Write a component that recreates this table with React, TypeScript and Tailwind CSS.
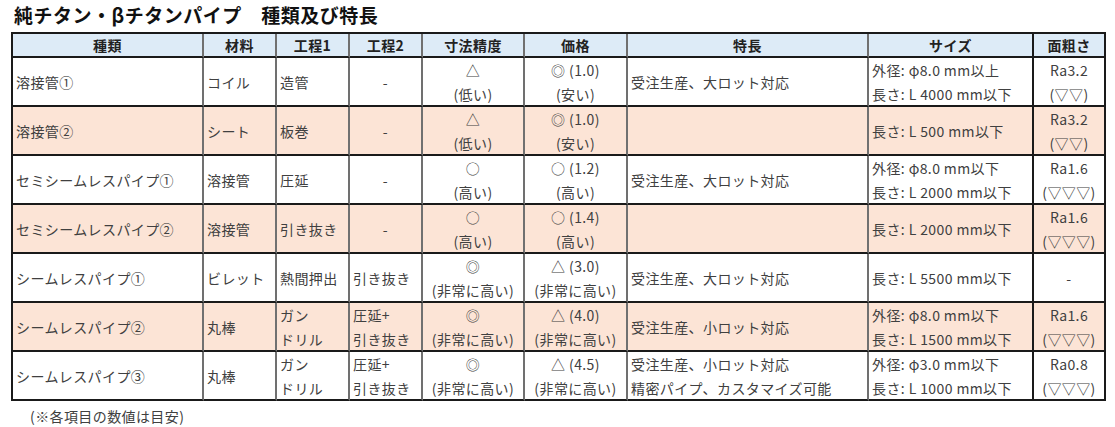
import React from 'react';

type Row = {
  name: string;
  material: string;
  step1: string[];
  step2: string[];
  precision: string[];
  price: string[];
  feature: string[];
  size: string[];
  rough: string[];
  pink?: boolean;
};

const rows: Row[] = [
  {
    name: '溶接管①',
    material: 'コイル',
    step1: ['造管'],
    step2: ['-'],
    precision: ['△', '(低い)'],
    price: ['◎ (1.0)', '(安い)'],
    feature: ['受注生産、大ロット対応'],
    size: ['外径: φ8.0 mm以上', '長さ: L 4000 mm以下'],
    rough: ['Ra3.2', '(▽▽)'],
  },
  {
    name: '溶接管②',
    material: 'シート',
    step1: ['板巻'],
    step2: ['-'],
    precision: ['△', '(低い)'],
    price: ['◎ (1.0)', '(安い)'],
    feature: [],
    size: ['長さ: L 500 mm以下'],
    rough: ['Ra3.2', '(▽▽)'],
    pink: true,
  },
  {
    name: 'セミシームレスパイプ①',
    material: '溶接管',
    step1: ['圧延'],
    step2: ['-'],
    precision: ['○', '(高い)'],
    price: ['○ (1.2)', '(高い)'],
    feature: ['受注生産、大ロット対応'],
    size: ['外径: φ8.0 mm以下', '長さ: L 2000 mm以下'],
    rough: ['Ra1.6', '(▽▽▽)'],
  },
  {
    name: 'セミシームレスパイプ②',
    material: '溶接管',
    step1: ['引き抜き'],
    step2: ['-'],
    precision: ['○', '(高い)'],
    price: ['○ (1.4)', '(高い)'],
    feature: [],
    size: ['長さ: L 2000 mm以下'],
    rough: ['Ra1.6', '(▽▽▽)'],
    pink: true,
  },
  {
    name: 'シームレスパイプ①',
    material: 'ビレット',
    step1: ['熱間押出'],
    step2: ['引き抜き'],
    precision: ['◎', '(非常に高い)'],
    price: ['△ (3.0)', '(非常に高い)'],
    feature: ['受注生産、大ロット対応'],
    size: ['長さ: L 5500 mm以下'],
    rough: ['-'],
  },
  {
    name: 'シームレスパイプ②',
    material: '丸棒',
    step1: ['ガン', 'ドリル'],
    step2: ['圧延+', '引き抜き'],
    precision: ['◎', '(非常に高い)'],
    price: ['△ (4.0)', '(非常に高い)'],
    feature: ['受注生産、小ロット対応'],
    size: ['外径: φ8.0 mm以下', '長さ: L 1500 mm以下'],
    rough: ['Ra1.6', '(▽▽▽)'],
    pink: true,
  },
  {
    name: 'シームレスパイプ③',
    material: '丸棒',
    step1: ['ガン', 'ドリル'],
    step2: ['圧延+', '引き抜き'],
    precision: ['◎', '(非常に高い)'],
    price: ['△ (4.5)', '(非常に高い)'],
    feature: ['受注生産、小ロット対応', '精密パイプ、カスタマイズ可能'],
    size: ['外径: φ3.0 mm以下', '長さ: L 1000 mm以下'],
    rough: ['Ra0.8', '(▽▽▽)'],
  },
];

const headers = ['種類', '材料', '工程1', '工程2', '寸法精度', '価格', '特長', 'サイズ', '面粗さ'];

function Cell({
  lines,
  center,
  last,
  darkRight,
}: {
  lines: string[];
  center?: boolean;
  last?: boolean;
  darkRight?: boolean;
}) {
  return (
    <div
      className={`flex h-[49px] flex-col justify-center border-b-2 border-r-2 border-b-[#1a1a1a] px-[3px] leading-[24px] ${
        center ? 'items-center' : 'items-start'
      } ${last || darkRight ? 'border-r-[#1a1a1a]' : 'border-r-[#707070]'}`}
    >
      {lines.map((l, i) => (
        <span key={i} className="whitespace-nowrap">
          {l}
        </span>
      ))}
    </div>
  );
}

export default function App() {
  return (
    <div
      className="h-[427px] w-[1115px] bg-white text-[#404040]"
      style={{ fontFamily: '"Noto Sans CJK JP", "Noto Sans", sans-serif' }}
    >
      <h1 className="flex h-[32px] items-center pl-[14px] pb-[2px] text-[19px] font-bold tracking-[0.5px] text-[#111]">
        純チタン・βチタンパイプ　種類及び特長
      </h1>

      <div className="ml-[11px] grid w-[1095px] grid-cols-[191px_73px_73px_73px_102px_103px_241px_165px_72px] border-l-2 border-t-2 border-[#1a1a1a] text-[14px] tracking-[0.4px]">
        {headers.map((h, i) => (
          <div
            key={h}
            className={`flex h-[24px] items-center justify-center border-b-2 border-r-2 border-b-[#1a1a1a] bg-[#ddebf7] font-bold text-[#222] ${
              i >= 7 ? 'border-r-[#1a1a1a]' : 'border-r-[#707070]'
            }`}
          >
            {h}
          </div>
        ))}

        {rows.map((r) => (
          <div key={r.name} className={`contents ${r.pink ? '[&>div]:bg-[#fce4d6]' : '[&>div]:bg-white'}`}>
            <Cell lines={[r.name]} />
            <Cell lines={[r.material]} />
            <Cell lines={r.step1} />
            <Cell lines={r.step2} center={r.step2[0] === '-'} />
            <Cell lines={r.precision} center />
            <Cell lines={r.price} center />
            <Cell lines={r.feature} />
            <Cell lines={r.size} darkRight />
            <Cell lines={r.rough} center last />
          </div>
        ))}
      </div>

      <p className="mt-[3px] pl-[30px] text-[14px] leading-[24px] tracking-[0.4px]">(※各項目の数値は目安)</p>
    </div>
  );
}
